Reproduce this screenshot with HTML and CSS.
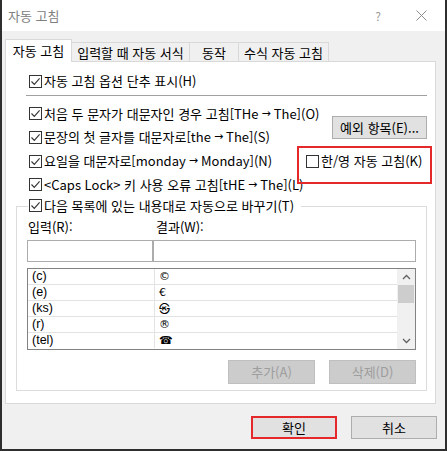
FILE: index.html
```html
<!DOCTYPE html>
<html lang="ko">
<head>
<meta charset="utf-8">
<title>자동 고침</title>
<link rel="stylesheet" href="styles.css">
</head>
<body>
<div class="window">
  <div class="titlebar">
    <span class="title">자동 고침</span>
    <span class="help">?</span>
    <span class="close"><svg width="11" height="11" viewBox="0 0 11 11"><path d="M0.5 0.5L10.5 10.5M10.5 0.5L0.5 10.5" stroke="#8c8c8c" stroke-width="1" fill="none"/></svg></span>
  </div>
  <div class="body">
    <div class="tabs">
      <div class="tab active">자동 고침</div>
      <div class="tab t2">입력할 때 자동 서식</div>
      <div class="tab t3">동작</div>
      <div class="tab t4">수식 자동 고침</div>
    </div>
    <div class="panel">
      <div class="opt first"><span class="cb"><svg width="11" height="11" viewBox="0 0 11 11"><path d="M1.5 5.5L4.3 8.4L9.6 2.4" fill="none" stroke="#333" stroke-width="1.1"/></svg></span>자동 고침 옵션 단추 표시(H)</div>
      <div class="sep"></div>
      <div class="section">
        <div class="left">
          <div class="opt row"><span class="cb"><svg width="11" height="11" viewBox="0 0 11 11"><path d="M1.5 5.5L4.3 8.4L9.6 2.4" fill="none" stroke="#333" stroke-width="1.1"/></svg></span>처음 두 문자가 대문자인 경우 고침[THe <span class="ar">→</span> The](O)</div>
          <div class="opt row"><span class="cb"><svg width="11" height="11" viewBox="0 0 11 11"><path d="M1.5 5.5L4.3 8.4L9.6 2.4" fill="none" stroke="#333" stroke-width="1.1"/></svg></span>문장의 첫 글자를 대문자로[the <span class="ar">→</span> The](S)</div>
          <div class="opt row"><span class="cb"><svg width="11" height="11" viewBox="0 0 11 11"><path d="M1.5 5.5L4.3 8.4L9.6 2.4" fill="none" stroke="#333" stroke-width="1.1"/></svg></span>요일을 대문자로[monday <span class="ar">→</span> Monday](N)</div>
          <div class="opt row"><span class="cb"><svg width="11" height="11" viewBox="0 0 11 11"><path d="M1.5 5.5L4.3 8.4L9.6 2.4" fill="none" stroke="#333" stroke-width="1.1"/></svg></span>&lt;Caps Lock&gt; 키 사용 오류 고침[tHE <span class="ar">→</span> The](L)</div>
        </div>
        <div class="right">
          <div class="btn except">예외 항목(E)...</div>
          <div class="redbox"><div class="opt"><span class="cb"></span>한/영 자동 고침(K)</div></div>
        </div>
      </div>
      <div class="group">
        <div class="opt legend"><span class="cb"><svg width="11" height="11" viewBox="0 0 11 11"><path d="M1.5 5.5L4.3 8.4L9.6 2.4" fill="none" stroke="#333" stroke-width="1.1"/></svg></span>다음 목록에 있는 내용대로 자동으로 바꾸기(T)</div>
        <div class="fields">
          <div class="lbl l1">입력(R):</div>
          <div class="lbl l2">결과(W):</div>
          <div class="input"></div>
          <div class="input"></div>
        </div>
        <div class="list">
          <div class="rows">
            <div class="lrow"><span class="c1">(c)</span><span class="c2">©</span></div>
            <div class="lrow"><span class="c1">(e)</span><span class="c2">€</span></div>
            <div class="lrow"><span class="c1">(ks)</span><span class="c2 cjk">㉿</span></div>
            <div class="lrow"><span class="c1">(r)</span><span class="c2">®</span></div>
            <div class="lrow"><span class="c1">(tel)</span><span class="c2">☎</span></div>
          </div>
          <div class="scroll">
            <div class="arrow"><svg width="9" height="6" viewBox="0 0 9 6"><path d="M1 5L4.5 1.5L8 5" fill="none" stroke="#606060" stroke-width="1.3"/></svg></div>
            <div class="thumb"></div>
            <div class="track"></div>
            <div class="arrow"><svg width="9" height="6" viewBox="0 0 9 6"><path d="M1 1L4.5 4.5L8 1" fill="none" stroke="#606060" stroke-width="1.3"/></svg></div>
          </div>
        </div>
        <div class="gbtns">
          <div class="btn disabled">추가(A)</div>
          <div class="btn disabled">삭제(D)</div>
        </div>
      </div>
    </div>
    <div class="footer">
      <div class="btn ok">확인</div>
      <div class="btn cancel">취소</div>
    </div>
  </div>
</div>
</body>
</html>
```
FILE: styles.css
```css
* { box-sizing: border-box; margin: 0; padding: 0; }
html, body { width: 447px; height: 451px; overflow: hidden; }
body {
  font-family: "Noto Sans CJK KR", "Noto Sans", sans-serif;
  font-size: 13px;
  color: #000;
  background: #fff;
}
.window {
  width: 447px;
  height: 451px;
  border: 2px solid #2e2e2e;
  border-top: none;
  display: flex;
  flex-direction: column;
  background: #f0f0f0;
}
.titlebar {
  flex: none;
  height: 31px;
  background: #fff;
  display: flex;
  align-items: center;
  padding-left: 6px;
  color: #808080;
}
.title { flex: 1; line-height: 20px; }
.help { width: 10px; text-align: center; margin-right: 33px; color: #9a9a9a; font-size: 12px; }
.close { width: 11px; height: 11px; display: flex; margin-right: 18px; }
.body { flex: 1; display: flex; flex-direction: column; padding-top: 9px; }
.tabs {
  display: flex;
  align-items: flex-end;
  margin-left: 3px;
  height: 22px;
  margin-bottom: -1px;
}
.tab {
  height: 20px;
  border: 1px solid #d9d9d9;
  border-bottom: none;
  background: #f0f0f0;
  display: flex;
  align-items: center;
  justify-content: center;
  line-height: 18px;
  white-space: nowrap;
}
.tab.active {
  height: 23px;
  width: 67px;
  background: #fff;
  position: relative;
  z-index: 1;
  padding-bottom: 1px;
}
.t2 { width: 119px; margin-left: -1px; }
.t3 { width: 50px; margin-left: -1px; }
.t4 { width: 91px; margin-left: -1px; }
.panel {
  width: 431px;
  height: 343px;
  margin-left: 3px;
  background: #fff;
  border: 1px solid #d9d9d9;
  display: flex;
  flex-direction: column;
}
.opt {
  display: flex;
  align-items: center;
  height: 20px;
  line-height: 20px;
  white-space: nowrap;
}
.ar { font-family: "DejaVu Sans", sans-serif; font-size: 11px; margin: 0 3px; }
.cb {
  flex: none;
  width: 13px;
  height: 13px;
  border: 1px solid #333;
  background: #fff;
  display: flex;
  margin-right: 2px;
}
.first { margin-top: 9px; padding-left: 23px; }
.sep { margin: 4px 0 0 20px; width: 401px; height: 1px; background: #a0a0a0; flex: none; }
.section { display: flex; margin-top: 6px; }
.left { flex: 1; min-width: 0; padding-left: 23px; }
.opt.row { height: 23.67px; }
.right { width: 135px; margin-right: 3px; display: flex; flex-direction: column; flex: none; }
.btn {
  display: flex;
  align-items: center;
  justify-content: center;
  border: 1px solid #adadad;
  background: #e1e1e1;
  line-height: 18px;
  white-space: nowrap;
}
.except { align-self: flex-end; width: 95px; height: 23px; margin: 14px 5px 0 0; }
.redbox {
  margin-top: 7px;
  height: 38px;
  border: 2px solid #e5282a;
  padding: 3px 0 0 7px;
}
.group {
  margin: 9px 8px 0 10px;
  border: 1px solid #dcdcdc;
  padding: 0 10px 6px 10px;
}
.legend {
  margin: -11px 0 0 1px;
  width: fit-content;
  background: #fff;
  padding: 0 7px 0 1px;
}
.fields {
  display: grid;
  grid-template-columns: 126px 1fr;
  grid-template-rows: 18px 22px;
  row-gap: 4px;
  margin-top: 2px;
}
.lbl { line-height: 18px; }
.l1 { padding-left: 1px; }
.l2 { padding-left: 3px; }
.input { border: 1px solid #acacac; background: #fff; }
.list {
  margin-top: 6px;
  height: 82px;
  border: 1px solid #828282;
  display: flex;
}
.rows { flex: 1; display: flex; flex-direction: column; }
.lrow {
  display: flex;
  align-items: center;
  height: 16px;
  border-bottom: 1px solid #e3e3e3;
  line-height: 15px;
}
.lrow:last-child { border-bottom: none; }
.c1 {
  width: 127px;
  height: 15px;
  padding-left: 4px;
  border-right: 1px solid #e3e3e3;
  font-family: "Liberation Sans", sans-serif;
  font-size: 12.5px;
}
.c2 { flex: 1; padding-left: 4px; font-family: "DejaVu Sans", sans-serif; font-size: 11px; }
.c2.cjk { font-family: "Noto Sans CJK KR", sans-serif; font-size: 11px; }
.scroll { width: 18px; background: #f0f0f0; display: flex; flex-direction: column; }
.arrow { height: 16px; display: flex; align-items: center; justify-content: center; }
.thumb { height: 18px; margin: 0 1px; background: #cdcdcd; }
.track { flex: 1; }
.gbtns { display: flex; justify-content: flex-end; gap: 14px; margin-top: 10px; }
.btn.disabled {
  width: 87px;
  height: 24px;
  background: #cccccc;
  border-color: #bfbfbf;
  color: #9d9d9d;
}
.footer {
  display: flex;
  justify-content: flex-end;
  gap: 14px;
  margin-top: 12px;
  padding-right: 8px;
}
.footer .btn { width: 86px; height: 23px; }
.btn.ok { border: 2px solid #e5282a; }
```
